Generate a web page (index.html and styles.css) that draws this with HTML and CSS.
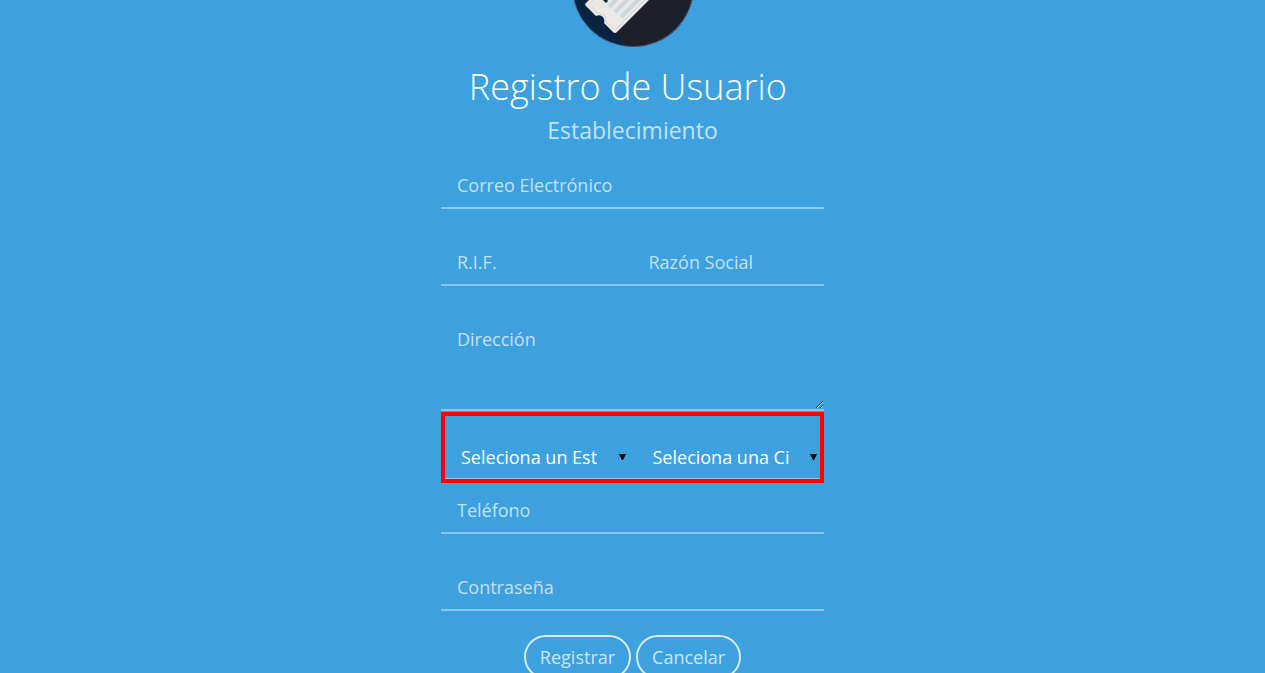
FILE: index.html
```html
<!DOCTYPE html>
<html lang="es">
<head>
<meta charset="utf-8">
<meta name="viewport" content="width=device-width, initial-scale=1">
<title>Registro de Usuario</title>
<link rel="stylesheet" href="styles.css">
</head>
<body class="page">
<main class="register">
  <svg class="logo" viewBox="0 0 122 122" role="img" aria-label="Logo">
    <defs><clipPath id="disc"><circle cx="61" cy="61" r="61"/></clipPath></defs>
    <g clip-path="url(#disc)">
      <path fill="#0b2343" d="M0 0h122v122H0z"/>
      <path fill="#1d1f2a" d="M42 107L76 73V0h46v122H56z"/>
      <path fill="#ebe9e5" d="M15 77L75 17L104 48L45 107Q43 109 41 107L32 98Q33 95 31 92Q28 89 24 91L14 81Q12 79 15 77z"/>
      <path fill="none" stroke="#cbc9c5" stroke-width=".7" d="M17 79L75 21L100 48L43 105L34 97Q34 93 32 90Q28 87 25 88z"/>
      <path stroke="#0b2343" stroke-width="3" d="M32 74l3 3"/>
      <path stroke="#cbd7dc" stroke-width="4" d="M37 82L70 49M43 87L77 53M49 92L84 57"/>
    </g>
    <circle cx="61" cy="61" r="60.8" fill="none" stroke="#8a9aa8" stroke-width=".5"/>
  </svg>
  <h1 class="title">Registro de Usuario&nbsp;</h1>
  <h2 class="subtitle">Establecimiento</h2>
  <form class="form">
    <div class="row"><input class="field" type="email" placeholder="Correo Electrónico" aria-label="Correo Electrónico"></div>
    <div class="row">
      <input class="field" type="text" placeholder="R.I.F." aria-label="R.I.F.">
      <input class="field" type="text" placeholder="Razón Social" aria-label="Razón Social">
    </div>
    <div class="row row-address"><textarea class="field address" placeholder="Dirección" aria-label="Dirección"></textarea></div>
    <div class="row row-selects">
      <div class="choice">
        <select class="field select" aria-label="Estado"><option>Seleciona un Est</option></select>
        <svg class="arrow" viewBox="0 0 7 6" aria-hidden="true"><path d="M0 0h7L4 6H3z"/></svg>
      </div>
      <div class="choice">
        <select class="field select" aria-label="Ciudad"><option>Seleciona una Ci</option></select>
        <svg class="arrow" viewBox="0 0 7 6" aria-hidden="true"><path d="M0 0h7L4 6H3z"/></svg>
      </div>
    </div>
    <div class="row row-phone"><input class="field" type="tel" placeholder="Teléfono" aria-label="Teléfono"></div>
    <div class="row row-last"><input class="field" type="password" placeholder="Contraseña" aria-label="Contraseña"></div>
    <div class="actions">
      <button class="button" type="submit">Registrar</button>
      <button class="button" type="button">Cancelar</button>
    </div>
  </form>
</main>
</body>
</html>
```
FILE: styles.css
```css
* { box-sizing: border-box; }
html { overflow: hidden; background: #3da1e0; }
.page {
  margin: 0;
  color: #fff;
  font: 18px/24px "Open Sans", sans-serif;
}
.register {
  display: flex;
  flex-direction: column;
  align-items: center;
  max-width: 383px;
  margin: 0 auto;
}
.logo {
  width: 122px;
  height: 122px;
  margin-top: -75px;
}
.title {
  margin: 16px 0 0;
  font-size: 36px;
  font-weight: 300;
  line-height: 48px;
  white-space: nowrap;
}
.subtitle {
  margin: 3px 0 0;
  color: rgba(255, 255, 255, .7);
  font-size: 23px;
  font-weight: 400;
  line-height: 32px;
}
.form { width: 100%; }
.row {
  display: flex;
  height: 47px;
  margin: 16px 0 30px;
  border-bottom: 2px solid #8ac7ef;
}
.field {
  flex: 1;
  width: 100%;
  min-width: 0;
  padding: 0 16px;
  border: 0;
  outline: 0;
  background: transparent;
  color: #fff;
  font: inherit;
}
.field::placeholder { color: rgba(255, 255, 255, .7); opacity: 1; }
.row + .row { margin-top: 30px; }
.form .row-address { height: 95px; margin-bottom: 1px; }
.address {
  padding: 11px 16px;
  resize: vertical;
}
.form .row-selects {
  height: 71px;
  margin: 0;
  padding: 20px 0 2px;
  border: 0;
  box-shadow: inset 0 0 0 4px #f00, inset 0 -5px #8ac7ef;
}
.choice {
  display: flex;
  flex: 1;
  position: relative;
}
.select {
  padding: 0 20px;
  appearance: none;
}
.arrow {
  position: absolute;
  top: 22px;
  right: 7px;
  width: 7px;
  height: 6px;
}
.form .row-phone { margin-top: 4px; }
.row-last { margin-bottom: 24px; }
.actions {
  display: flex;
  justify-content: center;
  gap: 5px;
}
.button {
  height: 44px;
  padding: 0 14px;
  border: 2px solid #d8ecf9;
  border-radius: 22px;
  background: transparent;
  color: rgba(255, 255, 255, .75);
  font: inherit;
}
```
